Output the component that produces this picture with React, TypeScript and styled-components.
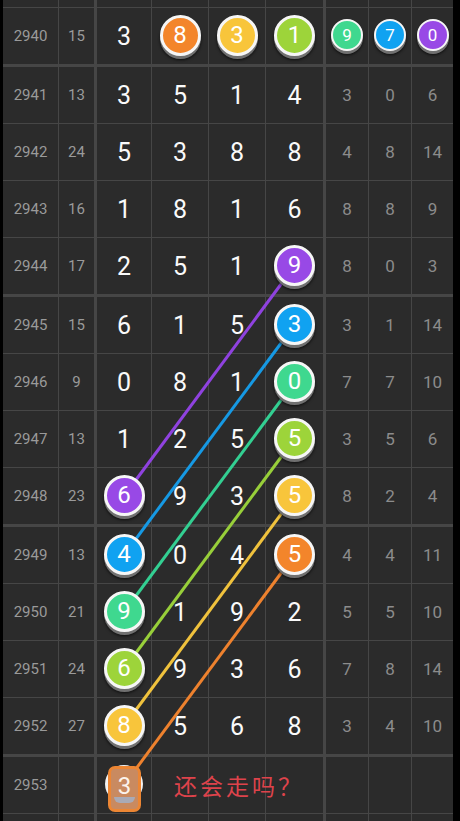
import React from 'react'
import styled, { createGlobalStyle } from 'styled-components'

const GlobalStyle = createGlobalStyle`
  html, body {
    margin: 0;
    padding: 0;
    background: #000;
    overflow: hidden;
  }
  body {
    font-family: Roboto, "Noto Sans", "Noto Sans CJK SC", sans-serif;
  }
`

// column widths include the left separator of each column
const COLS = [55, 36, 57, 57, 57, 58, 45, 43, 42]
const SEPS: Sep[] = ['none', 'thin', 'thick', 'thin', 'thin', 'thin', 'thick', 'thin', 'thin']
const ROW_H = 56
const LINE = '#464646'
const CELL = '#2b2b2b'

type Sep = 'none' | 'thin' | 'thick'
const sepW = (s: Sep) => (s === 'thick' ? 3 : s === 'thin' ? 1 : 0)

const C = {
  orange: '#f3852b',
  yellow: '#f8c53b',
  lime: '#9dd43a',
  teal: '#3fd88f',
  blue: '#10a2f1',
  purple: '#9849e6',
}

type Ball = { n: number; c: string }
type Val = number | Ball | null
type RowData = { id: number; sum?: number; d: Val[]; r: Val[]; mark?: boolean }

const rows: RowData[] = [
  { id: 2940, sum: 15, d: [3, { n: 8, c: C.orange }, { n: 3, c: C.yellow }, { n: 1, c: C.lime }], r: [{ n: 9, c: C.teal }, { n: 7, c: C.blue }, { n: 0, c: C.purple }] },
  { id: 2941, sum: 13, d: [3, 5, 1, 4], r: [3, 0, 6] },
  { id: 2942, sum: 24, d: [5, 3, 8, 8], r: [4, 8, 14] },
  { id: 2943, sum: 16, d: [1, 8, 1, 6], r: [8, 8, 9] },
  { id: 2944, sum: 17, d: [2, 5, 1, { n: 9, c: C.purple }], r: [8, 0, 3] },
  { id: 2945, sum: 15, d: [6, 1, 5, { n: 3, c: C.blue }], r: [3, 1, 14] },
  { id: 2946, sum: 9, d: [0, 8, 1, { n: 0, c: C.teal }], r: [7, 7, 10] },
  { id: 2947, sum: 13, d: [1, 2, 5, { n: 5, c: C.lime }], r: [3, 5, 6] },
  { id: 2948, sum: 23, d: [{ n: 6, c: C.purple }, 9, 3, { n: 5, c: C.yellow }], r: [8, 2, 4] },
  { id: 2949, sum: 13, d: [{ n: 4, c: C.blue }, 0, 4, { n: 5, c: C.orange }], r: [4, 4, 11] },
  { id: 2950, sum: 21, d: [{ n: 9, c: C.teal }, 1, 9, 2], r: [5, 5, 10] },
  { id: 2951, sum: 24, d: [{ n: 6, c: C.lime }, 9, 3, 6], r: [7, 8, 14] },
  { id: 2952, sum: 27, d: [{ n: 8, c: C.yellow }, 5, 6, 8], r: [3, 4, 10] },
  { id: 2953, d: [3, null, null, null], r: [null, null, null], mark: true },
]

// links drawn from a first-column ball up to a fourth-column ball
const links = [
  { from: 8, to: 4, c: '#8f42df' },
  { from: 9, to: 5, c: '#1699e4' },
  { from: 10, to: 6, c: '#33cf92' },
  { from: 11, to: 7, c: '#98cf3a' },
  { from: 12, to: 8, c: '#f0c23d' },
  { from: 13, to: 9, c: '#ee822e' },
]

const edgeOf = (i: number) => (i >= 1 && (i - 1) % 4 === 0 ? 'thick' : 'thin')

const STUB = 7
const rowCenters: number[] = []
{
  let y = STUB
  rows.forEach((_, i) => {
    y += edgeOf(i) === 'thick' ? 3 : 1
    rowCenters.push(y + ROW_H / 2)
    y += ROW_H
  })
}
const colCenters: number[] = []
{
  let x = 0
  COLS.forEach((w, i) => {
    const s = sepW(SEPS[i])
    colCenters.push(x + s + (w - s) / 2)
    x += w
  })
}

const Board = styled.div`
  position: relative;
  width: ${COLS.reduce((a, b) => a + b, 0)}px;
  height: 821px;
  margin-left: 3px;
  background: ${CELL};
  overflow: hidden;
`

const Row = styled.div<{ $edge: 'thin' | 'thick' | 'none'; $h: number }>`
  position: relative;
  display: grid;
  grid-template-columns: ${COLS.map((w) => w + 'px').join(' ')};
  height: ${({ $h }) => $h}px;
  border-top: ${({ $edge }) => ($edge === 'thick' ? 3 : $edge === 'thin' ? 1 : 0)}px solid ${LINE};
`

const Cell = styled.div<{ $sep: Sep }>`
  box-sizing: border-box;
  border-left: ${({ $sep }) => sepW($sep)}px solid ${LINE};
  display: flex;
  align-items: center;
  justify-content: center;
  min-width: 0;
`

const Issue = styled.span`
  color: #9a9a9a;
  font-size: 15px;
`

const Big = styled.span`
  color: #fafafa;
  font-size: 25px;
`

const Small = styled.span`
  color: #8c8c8c;
  font-size: 17px;
`

const BallDot = styled.span<{ $c: string; $size: number; $font: number }>`
  position: relative;
  z-index: 2;
  box-sizing: border-box;
  width: ${({ $size }) => $size}px;
  height: ${({ $size }) => $size}px;
  border-radius: 50%;
  background: ${({ $c }) => $c};
  border: ${({ $size }) => ($size > 36 ? 3 : 2.5)}px solid #f6f6f6;
  box-shadow: 0 3px 0 #707070, 0 4px 3px rgba(0, 0, 0, 0.7);
  color: #fff;
  font-size: ${({ $font }) => $font}px;
  display: flex;
  align-items: center;
  justify-content: center;
  margin-top: -2px;
`

const MarkWrap = styled.span`
  position: relative;
  z-index: 2;
  width: 38px;
  height: 38px;
  border-radius: 50%;
  background: #f2f2f2;
  margin-top: -2px;
`

const MarkBox = styled.span`
  position: absolute;
  left: 3px;
  top: 1px;
  width: 33px;
  height: 46px;
  box-sizing: border-box;
  border: 3px solid #ec8634;
  border-radius: 7px;
  background: #c98a60;
  display: flex;
  align-items: flex-start;
  justify-content: center;
  padding-top: 3px;
  color: #fbf3ec;
  font-size: 24px;
  overflow: hidden;
  &::after {
    content: '';
    position: absolute;
    left: 3px;
    right: 3px;
    bottom: 6px;
    height: 6px;
    border-radius: 0 0 12px 12px;
    background: #a9aab6;
  }
`

const Note = styled.span`
  position: absolute;
  left: 171px;
  top: 50%;
  transform: translateY(-50%);
  z-index: 3;
  color: #de434b;
  font-size: 23px;
  letter-spacing: 3px;
  font-family: "Noto Sans CJK SC", "Noto Sans", sans-serif;
  white-space: nowrap;
`

const Links = styled.svg`
  position: absolute;
  left: 0;
  top: 0;
  z-index: 1;
  pointer-events: none;
`

function Value({ v, big }: { v: Val; big: boolean }) {
  if (v === null) return null
  if (typeof v === 'number') return big ? <Big>{v}</Big> : <Small>{v}</Small>
  return big ? (
    <BallDot $c={v.c} $size={41} $font={24}>{v.n}</BallDot>
  ) : (
    <BallDot $c={v.c} $size={32} $font={17}>{v.n}</BallDot>
  )
}

function EmptyCells() {
  return (
    <>
      {COLS.map((_, i) => (
        <Cell key={i} $sep={SEPS[i]} />
      ))}
    </>
  )
}

export default function App() {
  return (
    <>
      <GlobalStyle />
      <Board>
        <Row $edge="none" $h={STUB}>
          <EmptyCells />
        </Row>
        {rows.map((r, i) => (
          <Row key={r.id} $edge={edgeOf(i)} $h={ROW_H}>
            <Cell $sep={SEPS[0]}>
              <Issue>{r.id}</Issue>
            </Cell>
            <Cell $sep={SEPS[1]}>{r.sum !== undefined && <Issue>{r.sum}</Issue>}</Cell>
            {r.d.map((v, j) => (
              <Cell key={'d' + j} $sep={SEPS[2 + j]}>
                {r.mark && j === 0 ? (
                  <MarkWrap>
                    <MarkBox>3</MarkBox>
                  </MarkWrap>
                ) : (
                  <Value v={v} big />
                )}
              </Cell>
            ))}
            {r.r.map((v, j) => (
              <Cell key={'r' + j} $sep={SEPS[6 + j]}>
                <Value v={v} big={false} />
              </Cell>
            ))}
            {r.mark && <Note>还会走吗？</Note>}
          </Row>
        ))}
        <Row $edge="thin" $h={20}>
          <EmptyCells />
        </Row>
        <Links width={450} height={821}>
          {links.map((l, i) => (
            <line
              key={i}
              x1={colCenters[2]}
              y1={rowCenters[l.from]}
              x2={colCenters[5]}
              y2={rowCenters[l.to]}
              stroke={l.c}
              strokeWidth={3}
            />
          ))}
        </Links>
      </Board>
    </>
  )
}
